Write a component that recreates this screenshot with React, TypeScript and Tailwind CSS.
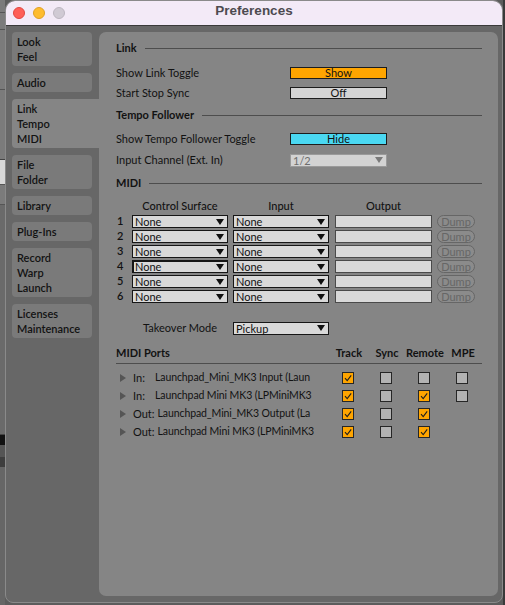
import React from 'react';

type PortRow = {
  dir: 'In:' | 'Out:';
  name: string;
  track: boolean;
  sync: boolean;
  remote: boolean;
  mpe: boolean | null;
};

const tabs: string[][] = [
  ['Look', 'Feel'],
  ['Audio'],
  ['Link', 'Tempo', 'MIDI'],
  ['File', 'Folder'],
  ['Library'],
  ['Plug-Ins'],
  ['Record', 'Warp', 'Launch'],
  ['Licenses', 'Maintenance'],
];

const ACTIVE_TAB = 2;

const ports: PortRow[] = [
  { dir: 'In:', name: 'Launchpad_Mini_MK3 Input (Laun', track: true, sync: false, remote: false, mpe: false },
  { dir: 'In:', name: 'Launchpad Mini MK3 (LPMiniMK3', track: true, sync: false, remote: true, mpe: false },
  { dir: 'Out:', name: 'Launchpad_Mini_MK3 Output (La', track: true, sync: false, remote: true, mpe: null },
  { dir: 'Out:', name: 'Launchpad Mini MK3 (LPMiniMK3', track: true, sync: false, remote: true, mpe: null },
];

function Arrow({ muted }: { muted?: boolean }) {
  return (
    <svg width="8" height="6" viewBox="0 0 8 6" className="shrink-0">
      <path d="M0 0 H8 L4 6 Z" fill={muted ? '#7a7a7a' : '#111111'} />
    </svg>
  );
}

function Dropdown({ value, width, focused, muted }: { value: string; width: string; focused?: boolean; muted?: boolean }) {
  return (
    <div
      className={[
        width,
        'h-[13px] flex items-center justify-between pl-[2px] pr-[3px] leading-none',
        muted ? 'bg-[#d3d3d3] border border-[#9a9a9a] text-[#6e6e6e]' : 'bg-[#d9d9d9] border border-[#161616] text-[#111]',
        focused ? 'shadow-[inset_1px_1px_0_#161616]' : '',
      ].join(' ')}
    >
      <span>{value}</span>
      <Arrow muted={muted} />
    </div>
  );
}

function Toggle({ label, color }: { label: string; color: string }) {
  return (
    <div className={`w-[97px] h-[12px] border border-[#1c1c1c] ${color} flex items-center justify-center leading-none pb-[1px]`}>
      {label}
    </div>
  );
}

function SectionHeader({ title }: { title: string }) {
  return (
    <div className="flex items-center h-[20px] gap-[8px]">
      <span className="font-bold">{title}</span>
      <div className="flex-1 h-px bg-[#4d4d4d]" />
    </div>
  );
}

function SettingRow({ label, children }: { label: string; children: React.ReactNode }) {
  return (
    <div className="flex items-center h-[20px]">
      <span className="w-[174px]">{label}</span>
      {children}
    </div>
  );
}

function Check({ on }: { on: boolean }) {
  return (
    <div
      className={`w-[12px] h-[12px] border border-[#262626] flex items-center justify-center ${on ? 'bg-[#ffa500]' : 'bg-[#b3b3b3]'}`}
    >
      {on && (
        <svg width="10" height="10" viewBox="0 0 10 10">
          <path d="M2 5.2 L4.2 7.6 L8.2 2.4" fill="none" stroke="#1e1e1e" strokeWidth="1.1" />
        </svg>
      )}
    </div>
  );
}

function CheckCell({ on }: { on: boolean | null }) {
  return <div className="w-[38px] flex justify-center pr-[3px]">{on !== null && <Check on={on} />}</div>;
}

function Sidebar() {
  return (
    <div className="flex flex-col gap-[7px] w-[80px] shrink-0">
      {tabs.map((lines, i) => (
        <div
          key={lines[0]}
          className={
            i === ACTIVE_TAB
              ? 'relative z-10 w-[88px] bg-[#858585] rounded-l-[4px] px-[5px] py-[2px] leading-[15px]'
              : 'w-[80px] bg-[#7a7a7a] rounded-[4px] px-[5px] py-[2px] leading-[15px]'
          }
        >
          {lines.map((l) => (
            <div key={l}>{l}</div>
          ))}
        </div>
      ))}
    </div>
  );
}

function MidiTable() {
  return (
    <div className="flex flex-col">
      <div className="flex items-center h-[16px] mt-[5px] font-medium">
        <span className="w-[16px]" />
        <span className="w-[96px] text-center">Control Surface</span>
        <span className="w-[96px] ml-[5px] text-center">Input</span>
        <span className="w-[97px] ml-[6px] text-center">Output</span>
      </div>
      {[1, 2, 3, 4, 5, 6].map((n) => (
        <div key={n} className="flex items-center h-[15px]">
          <span className="w-[16px] pl-[1px] font-semibold">{n}</span>
          <Dropdown value="None" width="w-[96px]" focused={n === 4} />
          <div className="ml-[5px]">
            <Dropdown value="None" width="w-[96px]" />
          </div>
          <div className="ml-[6px] w-[97px] h-[13px] bg-[#d9d9d9] border border-[#4a4a4a]" />
          <div className="ml-[5px] w-[38px] h-[13px] rounded-full border border-[#666] bg-[#8b8b8b] text-[#666] flex items-center justify-center leading-none">
            Dump
          </div>
        </div>
      ))}
      <div className="flex items-center h-[20px] mt-[14px]">
        <span className="w-[16px]" />
        <span className="w-[96px] pl-[11px]">Takeover Mode</span>
        <div className="ml-[5px]">
          <Dropdown value="Pickup" width="w-[96px]" />
        </div>
      </div>
    </div>
  );
}

function MidiPorts() {
  return (
    <div className="flex flex-col mt-[5px]">
      <div className="flex items-center h-[21px] border-b border-[#4d4d4d] font-bold">
        <span className="w-[214px]">MIDI Ports</span>
        <span className="w-[38px] text-center">Track</span>
        <span className="w-[38px] text-center">Sync</span>
        <span className="w-[38px] text-center">Remote</span>
        <span className="w-[38px] text-center">MPE</span>
      </div>
      <div className="flex flex-col mt-[5px]">
        {ports.map((p, i) => (
          <div key={i} className="flex items-center h-[18px]">
            <div className="w-[208px] flex items-center whitespace-nowrap">
              <svg width="6" height="8" viewBox="0 0 6 8" className="ml-[4px] shrink-0">
                <path d="M0 0 L6 4 L0 8 Z" fill="#555" />
              </svg>
              <span className={p.dir === 'In:' ? 'ml-[7px] w-[22px] shrink-0' : 'ml-[7px] shrink-0'}>{p.dir}</span>
              <span className={`text-[10.5px] tracking-[-0.1px] ${p.dir === 'Out:' ? 'ml-[3px]' : ''}`}>{p.name}</span>
            </div>
            <div className="w-[6px]" />
            <CheckCell on={p.track} />
            <CheckCell on={p.sync} />
            <CheckCell on={p.remote} />
            <CheckCell on={p.mpe} />
          </div>
        ))}
      </div>
    </div>
  );
}

export default function App() {
  return (
    <div className="w-[505px] h-[605px] flex bg-[#5c5c5c] overflow-hidden text-[11px] text-[#121212] [font-family:Lato,'Liberation_Sans',sans-serif]">
      {/* strip of the app window behind */}
      <div className="w-[5px] shrink-0 flex flex-col bg-[#7b7b7b]">
        <div className="h-[13px] border-b border-[#555]" />
        <div className="h-[17px] border-b border-[#555]" />
        <div className="h-[60px] border-b border-[#555]" />
        <div className="h-[70px] border-b border-[#444]" />
        <div className="h-[25px] bg-[#d8d8d8] border-b border-[#555]" />
        <div className="h-[20px] border-b border-[#555]" />
        <div className="h-[230px] bg-[#6a6a6a] border-b border-[#444]" />
        <div className="h-[10px] bg-[#111]" />
        <div className="h-[12px] bg-[#555]" />
        <div className="h-[10px] bg-[#3e3e3e]" />
        <div className="flex-1 bg-[#666]" />
      </div>

      <div className="w-[498px] h-[603px] shrink-0 flex flex-col bg-[#676767] border border-[#8a8a8a] rounded-t-[10px] rounded-b-[8px] overflow-hidden">
        <div className="h-[25px] shrink-0 grid grid-cols-[1fr_auto_1fr] items-center bg-[#f3eaf7] border-b border-[#3a3a3a]">
          <div className="flex items-center gap-[8px] pl-[7px]">
            <span className="w-[12px] h-[12px] rounded-full bg-[#fe5f57] border border-[#e14640]" />
            <span className="w-[12px] h-[12px] rounded-full bg-[#febc2e] border border-[#dfa023]" />
            <span className="w-[12px] h-[12px] rounded-full bg-[#d0cad4] border border-[#bcb6c0]" />
          </div>
          <span className="pb-[3px] text-[13.5px] font-bold text-[#4d4a50] [font-family:'Liberation_Sans',Arial,sans-serif]">
            Preferences
          </span>
          <div />
        </div>

        <div className="flex-1 flex pl-[6px] pt-[6px] pb-[6px] gap-[7px]">
          <div className="font-semibold">
            <Sidebar />
          </div>

          <div className="w-[399px] h-[564px] bg-[#858585] rounded-[7px] pl-[17px] pr-[16px] pt-[6px] flex flex-col">
            <SectionHeader title="Link" />
            <div className="mt-[5px]">
              <SettingRow label="Show Link Toggle">
                <Toggle label="Show" color="bg-[#ffa500]" />
              </SettingRow>
              <SettingRow label="Start Stop Sync">
                <Toggle label="Off" color="bg-[#d4d4d4]" />
              </SettingRow>
            </div>

            <div className="mt-[2px]">
              <SectionHeader title="Tempo Follower" />
            </div>
            <div className="mt-[4px]">
              <SettingRow label="Show Tempo Follower Toggle">
                <Toggle label="Hide" color="bg-[#4ad8f2]" />
              </SettingRow>
            </div>
            <div className="mt-[1px]">
              <SettingRow label="Input Channel (Ext. In)">
                <Dropdown value="1/2" width="w-[97px]" muted />
              </SettingRow>
            </div>

            <div className="mt-[3px]">
              <SectionHeader title="MIDI" />
            </div>
            <MidiTable />
            <MidiPorts />
          </div>
        </div>
      </div>

      <div className="flex-1 bg-[#3a3a3a]" />
    </div>
  );
}
